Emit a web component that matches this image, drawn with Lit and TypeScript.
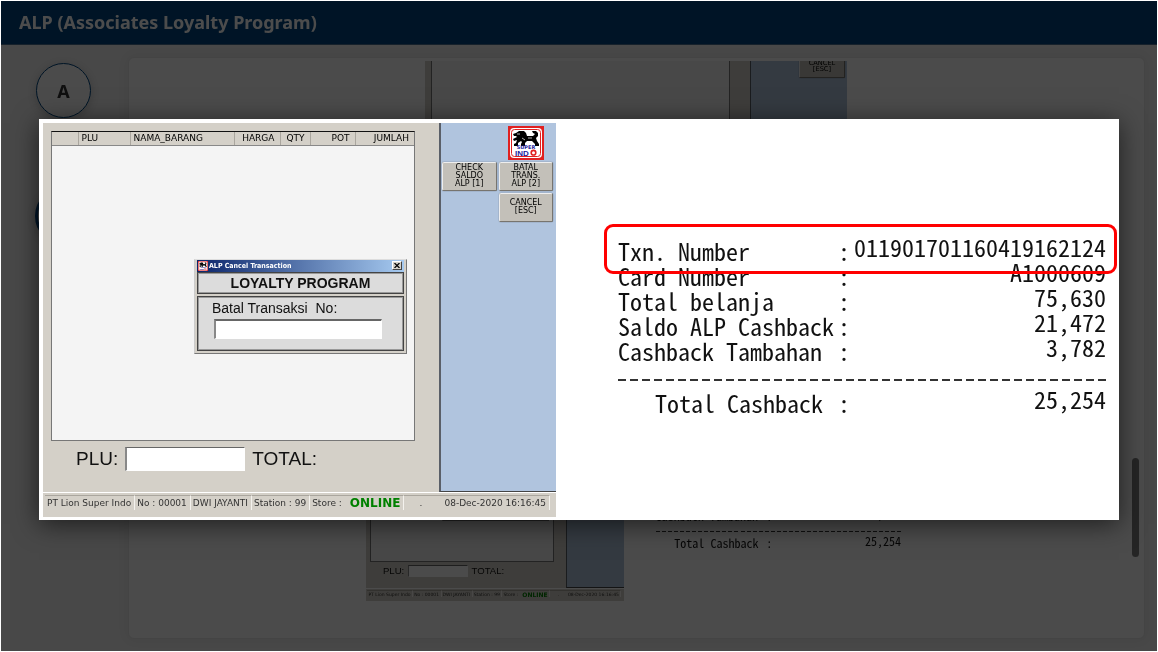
import { LitElement, html, css, svg } from "lit";
import { customElement, property } from "lit/decorators.js";

const lion = svg`
  <path d="M8 7l3-2h5l2 2 1 3h6l2-2-2-1-1-2h4l2 2v3l-2 2 1 3 2 3v2h-4v-2l-3-3h-5l-2 2v3h-4v-2l1-2-1-1-3 2v3H6v-2l2-1 1-3-3 1-1-2 4-2-1-1H6l-1-2z"/>
  <path d="M9 8h3M14 12l3 2M20 12h4" stroke="#fff" stroke-width=".7" fill="none"/>
`;

@customElement("brand-logo")
export class BrandLogo extends LitElement {
  static styles = css`
    :host { display: block; }
    svg { display: block; width: 100%; height: 100%; }
    .word { font: bold 5px "DejaVu Sans", Verdana, sans-serif; fill: #1c1c9c; }
    .name { font: bold 8px "Liberation Sans", Arial, sans-serif; fill: #1c1c9c; }
  `;
  render() {
    return html`
      <svg viewBox="0 0 36 34" preserveAspectRatio="none" role="img" aria-label="Super Indo">
        <rect width="36" height="34" fill="#e02020" />
        <rect x="2" y="2" width="32" height="30" rx="4" fill="#fff" />
        <rect x="3.5" y="3.5" width="29" height="27" rx="3" fill="#fff" stroke="#e02020" stroke-width="1" />
        ${lion}
        <text class="word" x="18" y="23" text-anchor="middle">SUPER</text>
        <text class="name" x="7" y="29.5">IND</text>
        <circle cx="25.5" cy="26.7" r="2.3" fill="none" stroke="#e02020" stroke-width="1.6" />
      </svg>
    `;
  }
}

@customElement("pos-screen")
export class PosScreen extends LitElement {
  @property({ type: Boolean }) dialog = false;

  static styles = css`
    :host {
      display: flex;
      flex-direction: column;
      background: #d4d0c8;
      color: #111;
      font-family: "DejaVu Sans", Verdana, sans-serif;
    }
    * { box-sizing: border-box; }
    .work { flex: 1; display: flex; }
    .sale { flex: 1; position: relative; padding: 8px 24px 0 8px; }
    .list {
      display: flex;
      flex-direction: column;
      height: 310px;
      background: #f4f4f4;
      border: 1px solid #777;
      border-top-color: #111;
    }
    table { width: 100%; border-collapse: collapse; table-layout: fixed; }
    th {
      height: 14px;
      padding: 0 5px 0 3px;
      background: #d4d0c8;
      border-bottom: 1px solid #888;
      border-right: 1px solid #aaa69e;
      font: 9px/12px "DejaVu Sans", Verdana, sans-serif;
      color: #000;
      text-align: right;
    }
    th:last-child { border-right: 0; }
    th.left { text-align: left; }
    .c0 { width: 26px; }
    .c1 { width: 52px; }
    .c2 { width: 104px; }
    .c3 { width: 46px; }
    .c4 { width: 30px; }
    .c5 { width: 45px; }
    .totals {
      display: flex;
      align-items: center;
      gap: 7px;
      padding: 6px 0 0 25px;
      font: 19px/24px "Liberation Sans", Arial, sans-serif;
    }
    .totals input { width: 120px; height: 24px; }
    input {
      border: 1px solid #fff;
      border-top: 1px solid #666;
      border-left: 2px solid #888;
      border-radius: 0;
      background: #fff;
      padding: 0 4px;
      outline: 0;
    }
    .side {
      width: 117px;
      padding: 3px 3px 0 1px;
      background: #b0c4de;
      border-left: 2px solid #5a5f68;
      border-bottom: 1px solid #444;
      display: grid;
      grid-template-columns: 1fr 1fr;
      grid-template-rows: 34px 29px 29px;
      gap: 2px;
      align-content: start;
    }
    .side brand-logo { grid-column: 2; width: 36px; height: 34px; justify-self: center; }
    .key {
      border: 1px solid #77746e;
      border-top-color: #eee;
      border-left-color: #eee;
      border-radius: 2px;
      background: #c3c0b9;
      box-shadow: 0 0 1px #333;
      color: #000;
      padding: 0;
      font: 8px/8px "DejaVu Sans", Verdana, sans-serif;
      white-space: pre-line;
    }
    .key:last-child { grid-column: 2; }
    .status {
      display: flex;
      height: 25px;
      padding: 2px 6px 7px 2px;
      border-top: 1px solid #fff;
      font: 9px/14px "DejaVu Sans", Verdana, sans-serif;
      color: #333;
      white-space: nowrap;
    }
    .status span { padding: 0 3px 0 2px; border-right: 1px solid #f4f2ee; border-top: 1px solid #aaa69e; }
    .status .grow { flex: 1; }
    .status .store { display: flex; gap: 8px; }
    .status .tick { border-right: 0; padding-left: 15px; }
    .online { font: bold 12px/14px "DejaVu Sans", Verdana, sans-serif; color: #008000; }
    .dialog {
      position: absolute;
      left: 151px;
      top: 136px;
      width: 213px;
      padding: 0 2px 2px;
      background: #d4d0c8;
      border: 1px solid #777;
      border-top-color: #ddd;
      border-left-color: #ccc;
    }
    .bar {
      display: flex;
      align-items: center;
      gap: 1px;
      height: 12px;
      padding: 0 2px 0 1px;
      background: linear-gradient(90deg, #0a246a, #a6caf0);
      color: #fff;
      font: bold 7px/12px "DejaVu Sans Condensed", "DejaVu Sans", sans-serif;
    }
    .bar brand-logo { width: 10px; height: 10px; }
    .bar b { flex: 1; }
    .close {
      display: grid;
      place-items: center;
      width: 10px;
      height: 9px;
      padding: 0;
      border: 1px solid #fff;
      border-right-color: #444;
      border-bottom-color: #444;
      background: #d4d0c8;
    }
    .close svg { width: 6px; height: 5px; }
    .box { border: 1px solid #444; outline: 1px solid #999; outline-offset: -2px; background: #dcdcdc; }
    h2 { margin: 0; font: bold 14px/20px "Liberation Sans", Arial, sans-serif; text-align: center; }
    .form {
      display: flex;
      flex-direction: column;
      gap: 3px;
      align-items: flex-start;
      margin-top: 2px;
      padding: 3px 15px 11px 14px;
      font: 14px/16px "Liberation Sans", Arial, sans-serif;
      white-space: pre;
    }
    .form input { width: 168px; height: 20px; border-top-width: 2px; margin-left: 2px; }
  `;

  render() {
    return html`
      <div class="work">
        <div class="sale">
          <div class="list">
            <table>
              <thead>
                <tr>
                  <th class="c0"></th>
                  <th class="c1 left">PLU</th>
                  <th class="c2 left">NAMA_BARANG</th>
                  <th class="c3">HARGA</th>
                  <th class="c4">QTY</th>
                  <th class="c5">POT</th>
                  <th>JUMLAH</th>
                </tr>
              </thead>
            </table>
          </div>
          <div class="totals">
            <label for="plu">PLU:</label><input id="plu" />
            <span>TOTAL:</span>
          </div>
          ${this.dialog ? this.cancelDialog() : null}
        </div>
        <div class="side">
          <brand-logo></brand-logo>
          <button class="key">${"CHECK\nSALDO\nALP [1]"}</button>
          <button class="key">${"BATAL\nTRANS.\nALP [2]"}</button>
          <button class="key">${"CANCEL\n[ESC]"}</button>
        </div>
      </div>
      <div class="status">
        <span>PT Lion Super Indo</span>
        <span>No : 00001</span>
        <span>DWI JAYANTI</span>
        <span>Station : 99</span>
        <span class="store">Store :<b class="online">ONLINE</b></span>
        <span class="tick grow">.</span>
        <span>08-Dec-2020 16:16:45</span>
      </div>
    `;
  }

  cancelDialog() {
    return html`
      <div class="dialog" role="dialog" aria-label="ALP Cancel Transaction">
        <div class="bar">
          <brand-logo></brand-logo><b>ALP Cancel Transaction</b>
          <button class="close" aria-label="Close">
            <svg viewBox="0 0 6 5"><path d="M.5 0l5 5M5.5 0l-5 5" stroke="#000" stroke-width="1.2" /></svg>
          </button>
        </div>
        <h2 class="box">LOYALTY PROGRAM</h2>
        <div class="box form"><label for="txn">${"Batal Transaksi  No:"}</label><input id="txn" /></div>
      </div>
    `;
  }
}

@customElement("cancel-slide")
export class CancelSlide extends LitElement {
  static styles = css`
    :host {
      display: flex;
      box-sizing: border-box;
      height: 401px;
      padding: 4px 2px 3px 4px;
      background: #fff;
    }
    * { box-sizing: border-box; }
    pos-screen { width: 513px; flex: none; }
    .receipt {
      position: relative;
      flex: 1;
      padding: 115px 11px 0 62px;
      color: #111;
      font: 24px/25px "Noto Sans Mono CJK SC", "Liberation Mono", monospace;
    }
    .row { display: grid; grid-template-columns: 220px 12px 1fr; }
    .row.sum { margin-top: 9px; }
    .sum .name { padding-left: 37px; }
    .name { white-space: nowrap; }
    .value { text-align: right; margin-top: -4px; }
    .rule { height: 18px; display: flex; align-items: flex-end; }
    .rule::before {
      content: "";
      flex: 1;
      height: 2px;
      background: repeating-linear-gradient(90deg, #333 0 8px, transparent 8px 12px);
    }
    .mark {
      position: absolute;
      top: 101px;
      left: 48px;
      right: 0;
      height: 50px;
      border: 3px solid #f00;
      border-radius: 9px;
    }
  `;

  rows = [
    ["Txn. Number", "011901701160419162124"],
    ["Card Number", "A1000609"],
    ["Total belanja", "75,630"],
    ["Saldo ALP Cashback", "21,472"],
    ["Cashback Tambahan", "3,782"],
  ];

  line(name: string, value: string, cls = "") {
    return html`<div class="row ${cls}">
      <span class="name">${name}</span><span>:</span><span class="value">${value}</span>
    </div>`;
  }

  render() {
    return html`
      <pos-screen dialog></pos-screen>
      <div class="receipt">
        ${this.rows.map(([n, v]) => this.line(n, v))}
        <div class="rule"></div>
        ${this.line("Total Cashback", "25,254", "sum")}
        <div class="mark"></div>
      </div>
    `;
  }
}

@customElement("app-root")
export class AppRoot extends LitElement {
  static styles = css`
    :host {
      display: flex;
      box-sizing: border-box;
      height: 100vh;
      padding: 1px;
      background: #fff;
      font-family: "Noto Sans", "Open Sans", sans-serif;
    }
    * { box-sizing: border-box; }
    .frame {
      position: relative;
      flex: 1;
      min-width: 0;
      display: flex;
      flex-direction: column;
      background: #f0f0f0;
      overflow: hidden;
    }
    header {
      flex: none;
      height: 44px;
      padding: 0 18px;
      background: #00457f;
      border-bottom: 1px solid #4a7090;
    }
    h1 { margin: 0; color: #fff; font-size: 18px; line-height: 43px; font-weight: 700; }
    main { flex: 1; min-height: 0; display: flex; padding: 12px 12px 12px 35px; gap: 37px; }
    nav { display: flex; flex-direction: column; align-items: center; gap: 69px; padding-top: 6px; width: 55px; }
    .step {
      flex: none;
      width: 55px;
      height: 55px;
      border: 1px solid #00457f;
      border-radius: 50%;
      background: #fafafa;
      color: #333;
      font: 700 18px/24px "Noto Sans", sans-serif;
      padding: 0;
      box-shadow: 0 2px 8px #0003;
    }
    .step.current { width: 58px; height: 58px; border-width: 3px; }
    .panel {
      flex: 1;
      display: flex;
      background: #fbfbfb;
      border: 1px solid #e4e4e4;
      border-radius: 6px;
      padding: 3px 5px 0 4px;
      box-shadow: 0 0 12px #0001;
    }
    .scroll {
      flex: 1;
      overflow: hidden;
      display: flex;
      flex-direction: column;
      justify-content: flex-end;
      align-items: center;
      gap: 72px;
      padding: 0 0 36px 7px;
    }
    .scroll > * { flex: none; mix-blend-mode: multiply; }
    .scroll pos-screen { width: 509px; height: 400px; zoom: 0.83; }
    .scroll cancel-slide { width: 1080px; zoom: 0.503; }
    .thumb { width: 7px; height: 99px; margin-top: 397px; border-radius: 4px; background: #7c7c7c; }
    .overlay {
      position: absolute;
      inset: 0;
      display: flex;
      align-items: center;
      padding: 0 38px 14px;
      background: #000000b3;
    }
    .overlay cancel-slide { flex: 1; box-shadow: 0 4px 24px #0009; }
  `;

  render() {
    return html`
      <div class="frame">
        <header><h1>ALP (Associates Loyalty Program)</h1></header>
        <main>
          <nav>
            <button class="step">A</button>
            <button class="step current" aria-label="Current step"></button>
          </nav>
          <section class="panel">
            <div class="scroll">
              <pos-screen></pos-screen>
              <cancel-slide></cancel-slide>
            </div>
            <div class="thumb"></div>
          </section>
        </main>
        <div class="overlay"><cancel-slide></cancel-slide></div>
      </div>
    `;
  }
}
